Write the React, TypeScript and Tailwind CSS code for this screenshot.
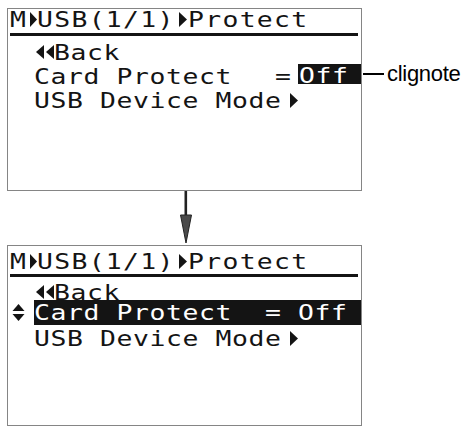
import React from "react";

function TriR({ w = 8, h = 15, className = "" }: { w?: number; h?: number; className?: string }) {
  return (
    <svg width={w} height={h} viewBox={`0 0 ${w} ${h}`} className={`shrink-0 ${className}`}>
      <polygon points={`0,0 ${w},${h / 2} 0,${h}`} fill="currentColor" />
    </svg>
  );
}
function TriL({ w = 8, h = 14, className = "" }: { w?: number; h?: number; className?: string }) {
  return (
    <svg width={w} height={h} viewBox={`0 0 ${w} ${h}`} className={`shrink-0 ${className}`}>
      <polygon points={`${w},0 0,${h / 2} ${w},${h}`} fill="currentColor" />
    </svg>
  );
}

/* row text: 22px DejaVu Sans Mono, widened 1.2x -> advance ~16.5px */
function T({ children }: { children: React.ReactNode }) {
  return <span className="inline-block origin-left scale-x-[1.2] tracking-[0.5px]">{children}</span>;
}
/* header text: advance ~17.2px */
function H({ children }: { children: React.ReactNode }) {
  return <span className="inline-block origin-left scale-x-[1.2] tracking-[1.1px]">{children}</span>;
}

function Header({ top }: { top: boolean }) {
  return (
    <div
      className={`ml-[2px] mr-[3px] border-b-[3px] border-[#141414] flex items-start text-[22px] leading-[22px] ${
        top ? "h-[27px] pt-0" : "h-[31px] pt-[5px]"
      }`}
    >
      <span className="w-[20px] shrink-0">
        <H>M</H>
      </span>
      <TriR w={7} h={15} className="mt-[3px]" />
      <span className="w-[138px] shrink-0">
        <H>USB(1/1)</H>
      </span>
      <TriR w={8} h={15} className="ml-[4px] mt-[3px]" />
      <span className="ml-[1px] shrink-0">
        <H>Protect</H>
      </span>
    </div>
  );
}

function BackRow({ cls, triCls }: { cls: string; triCls: string }) {
  return (
    <div className={`flex items-start pl-[28px] text-[22px] ${cls}`}>
      <TriL w={8} h={14} className={triCls} />
      <TriL w={8} h={14} className={`ml-[2px] ${triCls}`} />
      <span className="ml-0">
        <T>Back</T>
      </span>
    </div>
  );
}

function UsbRow({ cls }: { cls: string }) {
  return (
    <div className={`flex items-start pl-[26px] text-[22px] leading-[24px] ${cls}`}>
      <span className="w-[248px] shrink-0">
        <T>USB Device Mode</T>
      </span>
      <TriR w={8} h={15} className="ml-[8px] mt-[4px]" />
    </div>
  );
}

export default function App() {
  return (
    <div className="w-[462px] h-[426px] bg-white text-[#141414] font-['DejaVu_Sans_Mono',monospace] whitespace-pre overflow-hidden pt-[8px] pl-[7px]">
      {/* first screen + annotation */}
      <div className="flex items-start">
        <div className="w-[355px] h-[183px] shrink-0 border border-[#858585] flex flex-col">
          <Header top />
          <BackRow cls="mt-[5px] h-[24px] leading-[24px]" triCls="mt-[4px]" />
          <div className="flex items-start h-[24px] pl-[26px] text-[22px] leading-[24px]">
            <span className="w-[241px] shrink-0">
              <T>Card Protect</T>
            </span>
            <span className="w-[16px] shrink-0">
              <T>=</T>
            </span>
            <span className="ml-[7px] flex-1 h-[20px] -mt-[1px] pt-[2px] bg-[#141414] text-white leading-[20px] pl-[1px]">
              <T>Off</T>
            </span>
          </div>
          <UsbRow cls="h-[24px]" />
        </div>
        <div className="mt-[55px] h-[22px] flex items-center">
          <div className="w-[21px] h-[1.5px] bg-black ml-[1px]" />
          <span className="ml-[3px] font-['Liberation_Sans',Arial,sans-serif] text-[22px] leading-[22px] tracking-[-0.3px] text-black">
            clignote
          </span>
        </div>
      </div>

      {/* arrow */}
      <div className="h-[54px] pl-[172px]">
        <svg width="14" height="54" viewBox="0 0 14 54">
          <rect x="5.5" y="0" width="2.6" height="30" fill="#222" />
          <polygon points="1.5,24 12.5,24 7,52" fill="#4a4a4a" stroke="#222" strokeWidth="1" />
        </svg>
      </div>

      {/* second screen */}
      <div className="w-[355px] h-[181px] border border-[#858585] flex flex-col">
        <Header top={false} />
        <BackRow cls="mt-[9px] h-[14px] leading-[14px]" triCls="-mt-[1px]" />
        <div className="flex items-center h-[25px]">
          <svg width="13" height="17" viewBox="0 0 13 17" className="ml-[4px] shrink-0">
            <polygon points="6.5,0 12.5,7 0.5,7" fill="currentColor" />
            <polygon points="0.5,10 12.5,10 6.5,17" fill="currentColor" />
          </svg>
          <div className="ml-[9px] flex-1 h-[25px] bg-[#141414] text-white text-[22px] leading-[25px]">
            <T>Card Protect  = Off</T>
          </div>
        </div>
        <UsbRow cls="mt-[2px] h-[24px]" />
      </div>
    </div>
  );
}
